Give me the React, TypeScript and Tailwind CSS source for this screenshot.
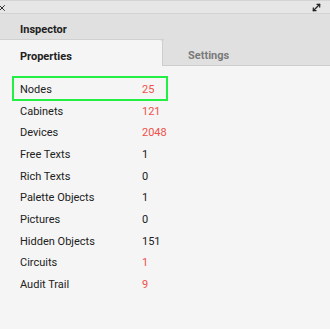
import { MoveDiagonal, X } from 'lucide-react';

const rows = [
  { label: 'Cabinets', value: '121', red: true },
  { label: 'Devices', value: '2048', red: true },
  { label: 'Free Texts', value: '1', red: false },
  { label: 'Rich Texts', value: '0', red: false },
  { label: 'Palette Objects', value: '1', red: false },
  { label: 'Pictures', value: '0', red: false },
  { label: 'Hidden Objects', value: '151', red: false },
  { label: 'Circuits', value: '1', red: true },
  { label: 'Audit Trail', value: '9', red: true },
];

export default function App() {
  return (
    <div className="w-[330px] h-[329px] bg-[#f5f5f5] text-[#212121] overflow-hidden" style={{ fontFamily: 'Roboto, "Liberation Sans", sans-serif' }}>
      {/* window bar */}
      <div className="h-[14px] bg-[#e6e6e6] border-t border-[#d4d4d4] border-b border-[#c4c4c4] flex items-center justify-between">
        <X size={10} strokeWidth={2.2} className="-ml-[3px] mt-[2px] text-[#222]" />
        <MoveDiagonal size={11} strokeWidth={2.6} className="mr-[8px] mt-[1px] text-[#222]" />
      </div>

      {/* title */}
      <div className="h-[26px] bg-[#e0e0e0] border-b border-[#d0d0d0] flex items-center pt-[7px] pl-[20px] text-[11px] font-bold">
        Inspector
      </div>

      {/* tabs */}
      <div className="flex h-[26px] bg-[#e0e0e0]">
        <div className="w-[162px] bg-[#f5f5f5] rounded-tr-[3px] flex items-center pt-[8px] pl-[20px] text-[11px] font-bold">
          Properties
        </div>
        <div className="flex-1 bg-[#e0e0e0] border-l border-b border-[#cdcdcd] rounded-tl-[3px] flex items-center pt-[9px] pl-[25px] text-[11px] font-bold text-[#7a7a7a] -mt-[1px]">
          Settings
        </div>
      </div>

      {/* property list */}
      <div className="pt-[10px] text-[11px]">
        <div className="ml-[12px] w-[156px] h-[25px] border-2 border-[#22ee44] flex items-center pt-[3px] pl-[6px]">
          <span className="w-[122px]">Nodes</span>
          <span className="text-[#f0504a]">25</span>
        </div>
        {rows.map((r) => (
          <div key={r.label} className="h-[21.7px] flex items-center pl-[20px]">
            <span className="w-[122px]">{r.label}</span>
            <span className={r.red ? 'text-[#f0504a]' : ''}>{r.value}</span>
          </div>
        ))}
      </div>
    </div>
  );
}
